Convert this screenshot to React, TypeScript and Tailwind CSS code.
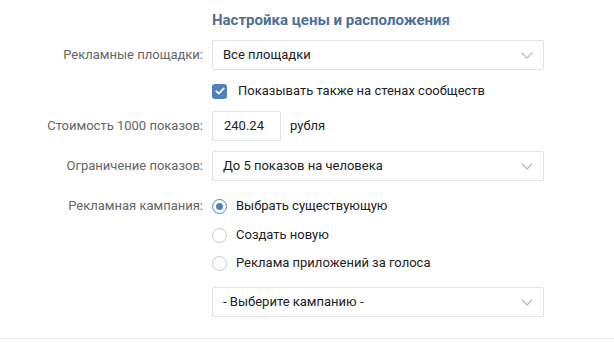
import React from 'react';

const Chevron: React.FC = () => (
  <svg width="12" height="7" viewBox="0 0 12 7" fill="none" className="shrink-0">
    <path d="M1 1l5 5 5-5" stroke="#b3bcc6" strokeWidth="1.3" strokeLinecap="round" strokeLinejoin="round" />
  </svg>
);

const Select: React.FC<{ value: string; className?: string }> = ({ value, className = '' }) => (
  <div
    className={`flex h-[30px] w-[332px] items-center justify-between rounded-[2px] border border-[#dfe3e8] bg-white pl-[10px] pr-[10px] text-[13px] leading-[16px] text-[#222] ${className}`}
  >
    <span>{value}</span>
    <Chevron />
  </div>
);

const Radio: React.FC<{ checked?: boolean; label: string }> = ({ checked, label }) => (
  <div className="flex h-[16px] items-center">
    <span
      className={`flex h-[15px] w-[15px] items-center justify-center rounded-full border ${
        checked ? 'border-[#5181b8]' : 'border-[#c5ccd4]'
      } bg-white`}
    >
      {checked && <span className="h-[7px] w-[7px] rounded-full bg-[#5181b8]" />}
    </span>
    <span className="ml-[9px] text-[13px] leading-[16px] text-[#222]">{label}</span>
  </div>
);

const Row: React.FC<{ label?: string; className?: string; children: React.ReactNode }> = ({
  label,
  className = '',
  children,
}) => (
  <div className={`flex items-center ${className}`}>
    <div className="w-[203px] shrink-0 text-right text-[13px] leading-[16px] text-[#656565]">{label}</div>
    <div className="ml-[9px] flex items-center">{children}</div>
  </div>
);

export default function App() {
  return (
    <div
      className="h-[343px] w-[614px] overflow-hidden bg-white"
      style={{ fontFamily: 'Roboto, "Liberation Sans", sans-serif' }}
    >
      <div className="flex flex-col border-b border-[#e7e8ec] pt-[10px] pb-[21px]">
        <Row>
          <h2 className="text-[15px] font-bold leading-[20px] text-[#4d6f98]">Настройка цены и расположения</h2>
        </Row>

        <Row label="Рекламные площадки:" className="mt-[10px]">
          <Select value="Все площадки" />
        </Row>

        <Row className="mt-[13px]">
          <div className="flex h-[16px] items-center">
            <span className="flex h-[15px] w-[15px] items-center justify-center rounded-[3px] bg-[#5181b8]">
              <svg width="10" height="8" viewBox="0 0 10 8" fill="none">
                <path d="M1.2 4.2l2.6 2.4L8.8 1.4" stroke="white" strokeWidth="1.6" strokeLinecap="round" strokeLinejoin="round" />
              </svg>
            </span>
            <span className="ml-[11px] text-[13px] leading-[16px] text-[#222]">Показывать также на стенах сообществ</span>
          </div>
        </Row>

        <Row label="Стоимость 1000 показов:" className="mt-[12px]">
          <div className="flex h-[30px] w-[69px] items-center rounded-[2px] border border-[#dfe3e8] pl-[11px] text-[13px] leading-[16px] text-[#222]">
            240.24
          </div>
          <span className="ml-[9px] text-[13px] leading-[16px] text-[#222]">рубля</span>
        </Row>

        <Row label="Ограничение показов:" className="mt-[10px]">
          <Select value="До 5 показов на человека" />
        </Row>

        <Row label="Рекламная кампания:" className="mt-[17px]">
          <Radio checked label="Выбрать существующую" />
        </Row>
        <Row className="mt-[13px]">
          <Radio label="Создать новую" />
        </Row>
        <Row className="mt-[12px]">
          <Radio label="Реклама приложений за голоса" />
        </Row>

        <Row className="mt-[16px]">
          <Select value="- Выберите кампанию -" />
        </Row>
      </div>
    </div>
  );
}
